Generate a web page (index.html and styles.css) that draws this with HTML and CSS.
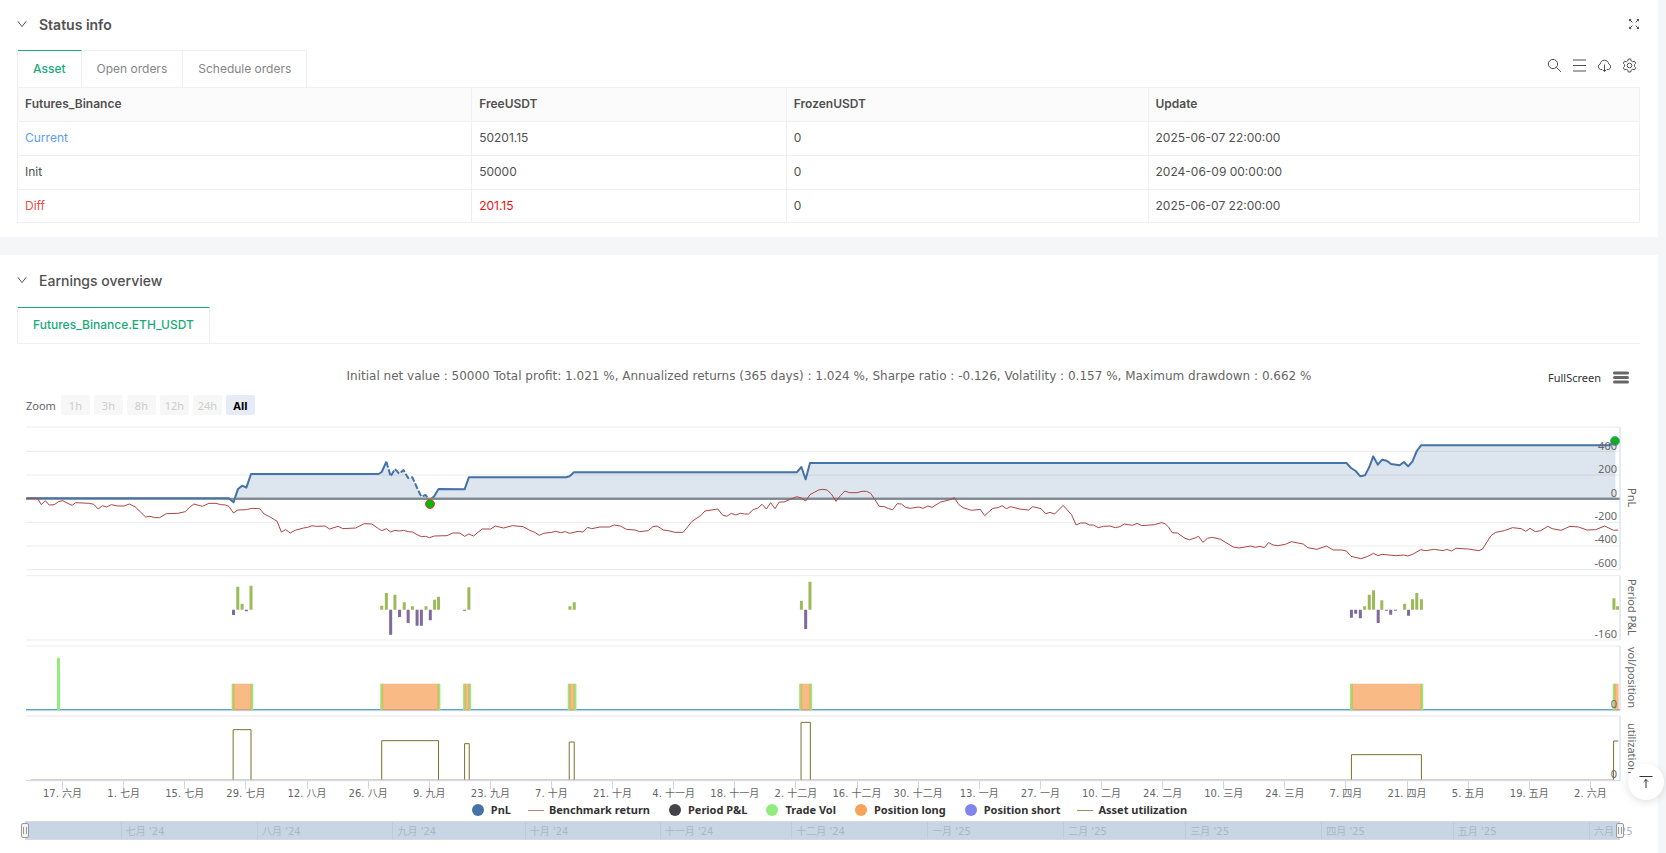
FILE: index.html
```html
<!DOCTYPE html>
<html lang="en">
<head>
<meta charset="utf-8">
<title>Backtest report</title>
<link rel="stylesheet" href="styles.css">
</head>
<body>
<section class="card status">
  <header class="card-head">
    <button class="toggle" aria-label="Collapse status info"><svg width="10" height="10" viewBox="0 0 10 10"><path d="M.8 2.2 5 7.6 9.2 2.2"/></svg></button>
    <h2 class="card-title strong">Status info</h2>
    <button class="icon-btn expand" aria-label="Expand"><svg width="12" height="12" viewBox="0 0 12 12"><path d="M4.300 4.300 1.500 1.500M7.700 4.300l2.800-2.800M4.300 7.700l-2.800 2.800M7.700 7.700l2.800 2.800"/><path class="tips" d="M1 1h2.600L1 3.600zM11 1v2.600L8.400 1zM1 11V8.400L3.600 11zM11 11H8.400L11 8.400z"/></svg></button>
  </header>
  <div class="tab-row">
    <div class="tabs" role="tablist">
      <button class="tab active" role="tab" aria-selected="true">Asset</button>
      <button class="tab" role="tab">Open orders</button>
      <button class="tab" role="tab">Schedule orders</button>
    </div>
    <div class="tools">
      <button class="icon-btn" aria-label="Search"><svg width="15" height="15" viewBox="0 0 15 15"><circle cx="6" cy="6" r="4.6"/><path d="m9.300 9.300 4.700 4.700"/></svg></button>
      <button class="icon-btn" aria-label="List"><svg width="15" height="15" viewBox="0 0 15 15"><path d="M1 2h13M1 7.500h13M1 13h13"/></svg></button>
      <button class="icon-btn" aria-label="Download"><svg width="15" height="15" viewBox="0 0 15 15"><path d="M5 11.5H3.6A2.9 2.9 0 0 1 3.2 6C3.700 3.600 5.400 2.200 7.500 2.200S11.300 3.600 11.800 6A2.900 2.900 0 0 1 11.400 11.500H10M7.500 6.500v7M5.700 11.700l1.800 1.800 1.800-1.800"/></svg></button>
      <button class="icon-btn" aria-label="Settings"><svg width="15" height="15" viewBox="0 0 15 15"><path d="M6.300 1h2.400l.5 1.900 1.400.8 1.900-.5 1.200 2-1.300 1.500v1.600l1.300 1.500-1.200 2-1.900-.5-1.400.8-.5 1.900H6.300l-.5-1.900-1.400-.8-1.900.5-1.200-2 1.300-1.500V6.700L1.300 5.200l1.200-2 1.900.5 1.400-.8z"/><circle cx="7.500" cy="7.500" r="2.300"/></svg></button>
    </div>
  </div>
  <table class="assets">
    <thead>
      <tr><th scope="col" class="c-name">Futures_Binance</th><th scope="col" class="c-free">FreeUSDT</th><th scope="col" class="c-frozen">FrozenUSDT</th><th scope="col">Update</th></tr>
    </thead>
    <tbody>
      <tr><td class="blue">Current</td><td>50201.15</td><td>0</td><td>2025-06-07 22:00:00</td></tr>
      <tr><td>Init</td><td>50000</td><td>0</td><td>2024-06-09 00:00:00</td></tr>
      <tr><td class="brick">Diff</td><td class="red">201.15</td><td>0</td><td>2025-06-07 22:00:00</td></tr>
    </tbody>
  </table>
</section>

<section class="card earnings">
  <header class="card-head">
    <button class="toggle" aria-label="Collapse earnings overview"><svg width="10" height="10" viewBox="0 0 10 10"><path d="M.8 2.200 5 7.600 9.200 2.200"/></svg></button>
    <h2 class="card-title">Earnings overview</h2>
  </header>
  <div class="tab-row lined">
    <div class="tabs" role="tablist">
      <button class="tab active" role="tab" aria-selected="true">Futures_Binance.ETH_USDT</button>
    </div>
  </div>

  <div class="chart">
    <div class="chart-head">
      <p class="chart-title">Initial net value : 50000 Total profit: 1.021 %, Annualized returns (365 days) : 1.024 %, Sharpe ratio : -0.126, Volatility : 0.157 %, Maximum drawdown : 0.662 %</p>
      <div class="chart-menu">
        <button class="fullscreen">FullScreen</button>
        <button class="burger" aria-label="Chart menu"><svg width="16" height="13" viewBox="0 0 16 13"><path d="M1.500 2h13M1.500 6.500h13M1.500 11h13"/></svg></button>
      </div>
    </div>
    <div class="zoom-row">
      <span class="zoom-label">Zoom</span>
      <button class="range" disabled>1h</button>
      <button class="range" disabled>3h</button>
      <button class="range" disabled>8h</button>
      <button class="range" disabled>12h</button>
      <button class="range" disabled>24h</button>
      <button class="range current">All</button>
    </div>

    <div class="plot-row">
      <div class="plot">
        <svg class="series" viewBox="73 20 4463 1062" preserveAspectRatio="none" aria-hidden="true">
          <path class="grid" d="M73 20H4536M73 93H4536M73 164H4536M73 306H4536M73 377H4536M73 448H4536M73 466H4536M73 659H4536M73 677H4536M73 887H4536"/>
          <path class="area" d="M74 234H641L654 246 666 207 678 196 690 202 703 161H1060L1069 155 1082 124 1094 168 1106 146 1118 160 1130 149 1143 173 1155 171 1168 203 1180 229 1192 224 1203 240 1216 228 1228 206 1301 207 1313 171H1585L1595 168 1607 156H2231L2244 140 2256 177 2268 128H3770L3783 143 3796 152 3809 168 3822 165 3834 140 3845 108 3858 133 3870 118 3883 121 3895 131 3919 135 3931 125 3943 138 3955 123 3967 92 3979 75H4507L4523 60V234Z"/>
          <path class="zero" d="M73 235H4536"/>
          <path class="pnl" d="M74 234H641L654 246 666 207 678 196 690 202 703 161H1060L1069 155 1082 124"/>
          <path class="pnl dashed" d="M1082 124 1094 168 1106 146 1118 160 1130 149 1143 173 1155 171 1168 203 1180 229 1192 224 1203 240"/>
          <path class="pnl" d="M1203 240 1216 228 1228 206 1301 207 1313 171H1585L1595 168 1607 156H2231L2244 140 2256 177 2268 128H3770L3783 143 3796 152 3809 168 3822 165 3834 140 3845 108 3858 133 3870 118 3883 121 3895 131 3919 135 3931 125 3943 138 3955 123 3967 92 3979 75H4507L4523 60"/>
          <path class="zero" d="M660 235H4536"/>
          <polyline class="bench" points="74,234 105,234 116,253 127,241 138,254 152,253 164,244 176,241 188,248 202,255 212,247 250,249 263,252 275,266 287,256 299,260 312,253 330,257 348,257 362,251 378,259 408,290 420,288 433,292 447,292 466,280 498,279 519,274 530,262 543,251 567,258 585,249 605,249 618,253 632,254 641,258 654,278 666,269 690,268 705,264 727,265 740,281 758,291 776,303 788,335 800,328 813,338 826,330 850,323 862,321 874,316 886,318 910,317 923,326 947,318 960,325 996,323 1020,310 1041,311 1060,325 1069,331 1082,325 1094,335 1106,330 1118,332 1130,330 1143,334 1155,335 1168,343 1180,349 1192,348 1203,352 1216,347 1252,346 1268,338 1288,338 1301,348 1313,341 1326,347 1350,326 1374,326 1387,317 1410,323 1435,316 1465,319 1483,330 1496,335 1510,345 1522,339 1545,336 1556,333 1570,337 1583,334 1595,339 1619,333 1632,335 1645,321 1657,325 1680,320 1706,320 1720,314 1737,317 1754,327 1778,329 1791,334 1815,331 1828,319 1840,317 1858,329 1876,332 1889,336 1913,336 1938,303 1963,285 1974,272 2010,266 2023,284 2035,288 2048,279 2060,284 2073,279 2085,281 2096,281 2109,268 2121,264 2134,252 2146,266 2158,247 2170,265 2182,245 2195,245 2231,229 2244,233 2256,242 2268,223 2280,216 2292,209 2304,207 2316,209 2328,221 2341,243 2353,226 2366,212 2378,217 2400,217 2414,213 2426,213 2438,219 2450,238 2462,258 2476,259 2488,265 2500,268 2512,250 2524,251 2536,261 2549,264 2573,260 2585,264 2598,257 2610,261 2634,245 2646,242 2660,238 2672,232 2685,253 2697,262 2720,270 2745,267 2757,286 2780,264 2795,262 2806,256 2818,265 2830,259 2855,266 2880,269 2892,259 2915,265 2928,280 2940,276 2953,281 2977,255 3001,284 3013,314 3026,308 3040,308 3050,314 3062,314 3075,322 3090,318 3108,317 3123,322 3136,319 3148,311 3171,315 3184,309 3197,316 3232,313 3252,307 3262,310 3272,320 3282,337 3297,338 3318,354 3331,358 3346,353 3356,348 3368,366 3381,354 3394,351 3418,357 3453,380 3470,383 3502,377 3515,381 3528,378 3540,382 3552,367 3565,374 3578,376 3599,372 3616,364 3649,371 3662,382 3687,387 3714,377 3733,389 3758,389 3770,392 3783,408 3810,415 3828,409 3846,399 3858,406 3870,402 3907,406 3930,404 3942,407 3957,401 3978,388 3992,391 4016,387 4041,391 4051,387 4064,392 4077,384 4111,386 4141,391 4151,386 4175,346 4188,336 4212,331 4235,322 4260,325 4272,333 4284,324 4299,334 4314,331 4334,318 4346,325 4371,330 4396,318 4420,320 4443,329 4468,328 4493,317 4518,330 4531,329"/>
          <path class="gain" d="M666 568V499M678 568V550M703 568V496M1069 568V556M1082 568V518M1106 568V523M1132 568V546M1155 568V558M1193 568V558M1217 568V538M1228 568V529M1313 568V501M1596 568V558M1608 568V546M2244 568V541M2268 568V484M3821 568V558M3834 568V523M3846 568V510M3869 568V540M3933 568V550M3955 568V537M3967 568V518M3980 568V537M4519 568V534M4529 568V558"/>
          <path class="loss" d="M654 568V584M690 568V573M1094 568V643M1119 568V590M1143 568V608M1168 568V616M1180 568V616M1205 568V600M1301 568V571M2256 568V626M3784 568V592M3796 568V580M3809 568V594M3859 568V608M3882 568V571M3894 568V583M3907 568V571M3944 568V586"/>
          <path class="axis" d="M73 871H4536M73 1081H4536"/>
          <path class="flat" d="M73 868H4536"/>
          <path class="vol" d="M164 870V712M653 870V790M705 870V790M1069 870V790M1229 870V790M1301 870V790M1315 870V790M1594 870V790M1610 870V790M2242 870V790M2270 870V790M3784 870V790M3981 870V790M4520 870V790"/>
          <path class="long" d="M652 870V790H705V870ZM1069 870V790H1229V870ZM1301 870V790H1315V870ZM1594 870V790H1609V870ZM2242 870V790H2270V870ZM3784 870V790H3981V870ZM4519 870V790H4532V870Z"/>
          <path class="util base" d="M86 1078H4518"/>
          <path class="util" d="M653 1078V928H703V1078M1069 1078V961H1228V1078M1301 1078V970H1314V1078M1594 1078V965H1608V1078M2243 1078V906H2269V1078M3784 1078V1003H3980V1078M4518 1078V962H4531"/>
          <path class="yaxis" d="M4536 20V448M4536 466V659M4536 677V871M4536 887V1081"/>
        </svg>
        <span class="marker low" style="left:25.3%;top:21.400%"></span>
        <span class="marker high" style="left:99.600%;top:3.600%"></span>
        <span class="ylab" style="top:5%">400</span>
        <span class="ylab" style="top:11.500%">200</span>
        <span class="ylab" style="top:18.300%">0</span>
        <span class="ylab" style="top:24.900%">-200</span>
        <span class="ylab" style="top:31.400%">-400</span>
        <span class="ylab" style="top:38.200%">-600</span>
        <span class="ylab" style="top:58.300%">-160</span>
        <span class="ylab" style="top:78%">0</span>
        <span class="ylab" style="top:97.700%">0</span>
      </div>
      <div class="axis-titles">
        <span>PnL</span><span>Period P&amp;L</span><span>vol/position</span><span>utilization</span>
      </div>
    </div>

    <div class="xaxis">
      <span>17. 六月</span><span>1. 七月</span><span>15. 七月</span><span>29. 七月</span><span>12. 八月</span><span>26. 八月</span><span>9. 九月</span><span>23. 九月</span><span>7. 十月</span><span>21. 十月</span><span>4. 十一月</span><span>18. 十一月</span><span>2. 十二月</span><span>16. 十二月</span><span>30. 十二月</span><span>13. 一月</span><span>27. 一月</span><span>10. 二月</span><span>24. 二月</span><span>10. 三月</span><span>24. 三月</span><span>7. 四月</span><span>21. 四月</span><span>5. 五月</span><span>19. 五月</span><span>2. 六月</span>
    </div>

    <div class="legend">
      <button class="key"><i class="dot k-pnl"></i>PnL</button>
      <button class="key"><i class="line k-bench"></i>Benchmark return</button>
      <button class="key"><i class="dot k-period"></i>Period P&amp;L</button>
      <button class="key"><i class="dot k-vol"></i>Trade Vol</button>
      <button class="key"><i class="dot k-long"></i>Position long</button>
      <button class="key"><i class="dot k-short"></i>Position short</button>
      <button class="key"><i class="line k-util"></i>Asset utilization</button>
    </div>

    <div class="navigator">
      <span class="month" style="left:6.010%">七月 '24</span>
      <span class="month" style="left:14.550%">八月 '24</span>
      <span class="month" style="left:23.040%">九月 '24</span>
      <span class="month" style="left:31.330%">十月 '24</span>
      <span class="month" style="left:39.800%">十一月 '24</span>
      <span class="month" style="left:48.040%">十二月 '24</span>
      <span class="month" style="left:56.560%">一月 '25</span>
      <span class="month" style="left:65.090%">二月 '25</span>
      <span class="month" style="left:72.750%">三月 '25</span>
      <span class="month" style="left:81.270%">四月 '25</span>
      <span class="month" style="left:89.520%">五月 '25</span>
      <span class="month" style="left:98.050%">六月 '25</span>
      <span class="handle start"></span>
      <span class="handle end"></span>
    </div>
  </div>
</section>

<button class="to-top" aria-label="Back to top"><svg width="14" height="14" viewBox="0 0 14 14"><path d="M.5 1.500h13M7 13V4.500M4.800 6.700 7 4.500l2.200 2.200"/></svg></button>
</body>
</html>
```
FILE: styles.css
```css
* { box-sizing: border-box; }

body {
  margin: 0;
  min-height: 100vh;
  display: flex;
  flex-direction: column;
  gap: 18px;
  padding-right: 8px;
  background: #f5f6f8;
  color: #515151;
  font-family: Inter, "Noto Sans CJK SC", sans-serif;
  font-size: 12px;
}

button {
  margin: 0;
  padding: 0;
  border: 0;
  background: none;
  color: inherit;
  font: inherit;
}

svg { display: block; fill: none; stroke: #515151; }
.tips { fill: #515151; stroke: none; }

.card { background: #fff; padding: 0 18px 0 17px; }
.status { padding-bottom: 14px; }
.earnings { flex: 1; padding-bottom: 13px; }

.card-head { display: flex; align-items: center; height: 50px; gap: 12px; padding-bottom: 2px; }
.earnings .card-head { height: 52px; }
.card-title { margin: 0; font-size: 14px; font-weight: 500; color: #515151; }
.card-title.strong { font-weight: 600; }
.expand { margin-left: auto; }

.tab-row { display: flex; justify-content: space-between; height: 37px; }
.tab-row.lined { border-bottom: 1px solid #f0f0f0; }
.tabs { display: flex; border-left: 1px solid #f0f0f0; }
.tab {
  padding: 0 15px 2px;
  border-top: 1px solid #f0f0f0;
  border-right: 1px solid #f0f0f0;
  color: #858585;
}
.tab.active { border-top-color: #18ab79; color: #18ab79; font-weight: 500; }
.tools { display: flex; align-items: center; gap: 10px; padding: 0 3px 6px 0; }

.assets { width: 100%; table-layout: fixed; border-collapse: collapse; }
.assets th, .assets td {
  height: 34px;
  padding: 0 7px 2px;
  border: 1px solid #f0f0f0;
  text-align: left;
  font-weight: 400;
}
.assets tbody tr:last-child td { height: 33px; }
.assets th { background: #fbfbfb; font-weight: 600; }
.c-name { width: 28%; }
.c-free { width: 19.4%; }
.c-frozen { width: 22.3%; }
.blue { color: #5b9df0; }
.brick { color: #e0504a; }
.assets .red { color: #f50f0f; }

.chart {
  padding: 0 0 0 9px;
  font-family: "Noto Sans", "Noto Sans CJK SC", sans-serif;
  font-size: 11px;
  color: #666;
}
.chart-title, .xaxis, .navigator { font-family: "DejaVu Sans", "Noto Sans CJK SC", sans-serif; }
.chart-head { position: relative; padding-top: 24px; }
.chart-title { margin: 0; padding-right: 8px; font-size: 12px; line-height: 16px; text-align: center; }
.chart-menu {
  position: absolute;
  right: 11px;
  top: 26px;
  display: flex;
  align-items: center;
  gap: 12px;
  color: #333;
}
.burger svg { stroke: #666; stroke-width: 3; stroke-linecap: round; }

.zoom-row { display: flex; align-items: center; gap: 4px; padding: 11px 0 12px; }
.zoom-label { padding-right: 1px; }
.range {
  width: 29px;
  height: 20px;
  border-radius: 2px;
  background: #f7f7f7;
  color: #ccc;
}
.range.current { background: #e6ebf5; color: #000; font-weight: 700; }

.plot-row { display: flex; }
.plot { position: relative; flex: 1; height: 354px; }
.series { width: 100%; height: 100%; overflow: visible; }
.series path, .series polyline { vector-effect: non-scaling-stroke; }
.grid { stroke: #ebebeb; }
.area { fill: #4572a7; fill-opacity: .18; stroke: none; }
.zero { stroke: #808891; stroke-width: 2; }
.pnl { stroke: #4572a7; stroke-width: 2; stroke-linejoin: round; }
.dashed { stroke-dasharray: 6 2; }
.bench { stroke: #aa4643; stroke-width: 1; stroke-linejoin: round; }
.gain { stroke: #9bbb59; stroke-width: 3; }
.loss { stroke: #80699b; stroke-width: 3; }
.flat { stroke: #3d96c4; }
.axis { stroke: #ccd6eb; }
.vol { stroke: #90ed7d; stroke-width: 3; }
.long { fill: #f7a35c; fill-opacity: .75; stroke: none; }
.util { stroke: #7d6f2c; }
.util.base { stroke: #d2cdb8; }
.yaxis { stroke: #ccd6eb; }

.marker {
  position: absolute;
  width: 10px;
  height: 10px;
  margin: -4px;
  border: 1px solid #e8442c;
  border-radius: 50%;
  background: #0ab40a;
}
.marker.high { border-color: #5a9bd0; }
.ylab { position: absolute; right: 3px; transform: translateY(-50%); }

.axis-titles {
  display: grid;
  grid-template-rows: 142fr 65fr 65fr 65fr;
  gap: 6px;
  width: 24px;
  margin-right: -4px;
  align-items: center;
  justify-items: center;
}
.axis-titles span { writing-mode: vertical-rl; line-height: 14px; white-space: nowrap; }

.xaxis {
  display: grid;
  grid-template-columns: repeat(26, minmax(0, 1fr));
  margin-right: 19px;
  padding-left: 6px;
  font-size: 10px;
}
.xaxis span { display: flex; flex-direction: column; align-items: center; line-height: 10px; white-space: nowrap; }
.xaxis span::before { content: ""; height: 8px; border-left: 1px solid #ccd6eb; }

.legend {
  display: flex;
  justify-content: center;
  gap: 17px;
  margin-right: 9px;
  padding: 3px 0 1px;
  color: #333;
  font-weight: 700;
  line-height: 16px;
}
.key { display: flex; align-items: center; gap: 5px; white-space: nowrap; }
.dot { width: 12px; height: 12px; margin: 0 2px; border-radius: 50%; }
.line { width: 16px; height: 1px; }
.k-pnl { background: #4572a7; }
.k-bench { background: #c67f7d; }
.k-period { background: #434348; }
.k-vol { background: #90ed7d; }
.k-long { background: #f7a35c; }
.k-short { background: #8085e9; }
.k-util { background: #9a8f5c; }

.navigator {
  position: relative;
  height: 19px;
  margin: 2px 20px 0 -1px;
  border-top: 1px solid #d5dae0;
  border-bottom: 1px solid #d5dae0;
  background: #c8d5e5;
  font-size: 10px;
}
.month {
  position: absolute;
  top: 0;
  height: 17px;
  padding-left: 4px;
  border-left: 1px solid #bccadb;
  color: #a9b5c4;
  line-height: 20px;
  white-space: nowrap;
}
.handle {
  position: absolute;
  top: 1px;
  width: 8px;
  height: 15px;
  border: 1px solid #999;
  border-radius: 2px;
  background: #f2f2f2;
}
.handle::after {
  content: "";
  position: absolute;
  inset: 3px 1px;
  border: solid #999;
  border-width: 0 1px;
}
.handle.start { left: -4px; }
.handle.end { right: -4px; }

.to-top {
  position: fixed;
  right: 2px;
  bottom: 53px;
  display: grid;
  place-items: center;
  width: 36px;
  height: 36px;
  border-radius: 50%;
  background: #fff;
  box-shadow: 0 2px 8px rgba(0, 0, 0, .12);
}
.to-top svg { stroke: #333; }
```
